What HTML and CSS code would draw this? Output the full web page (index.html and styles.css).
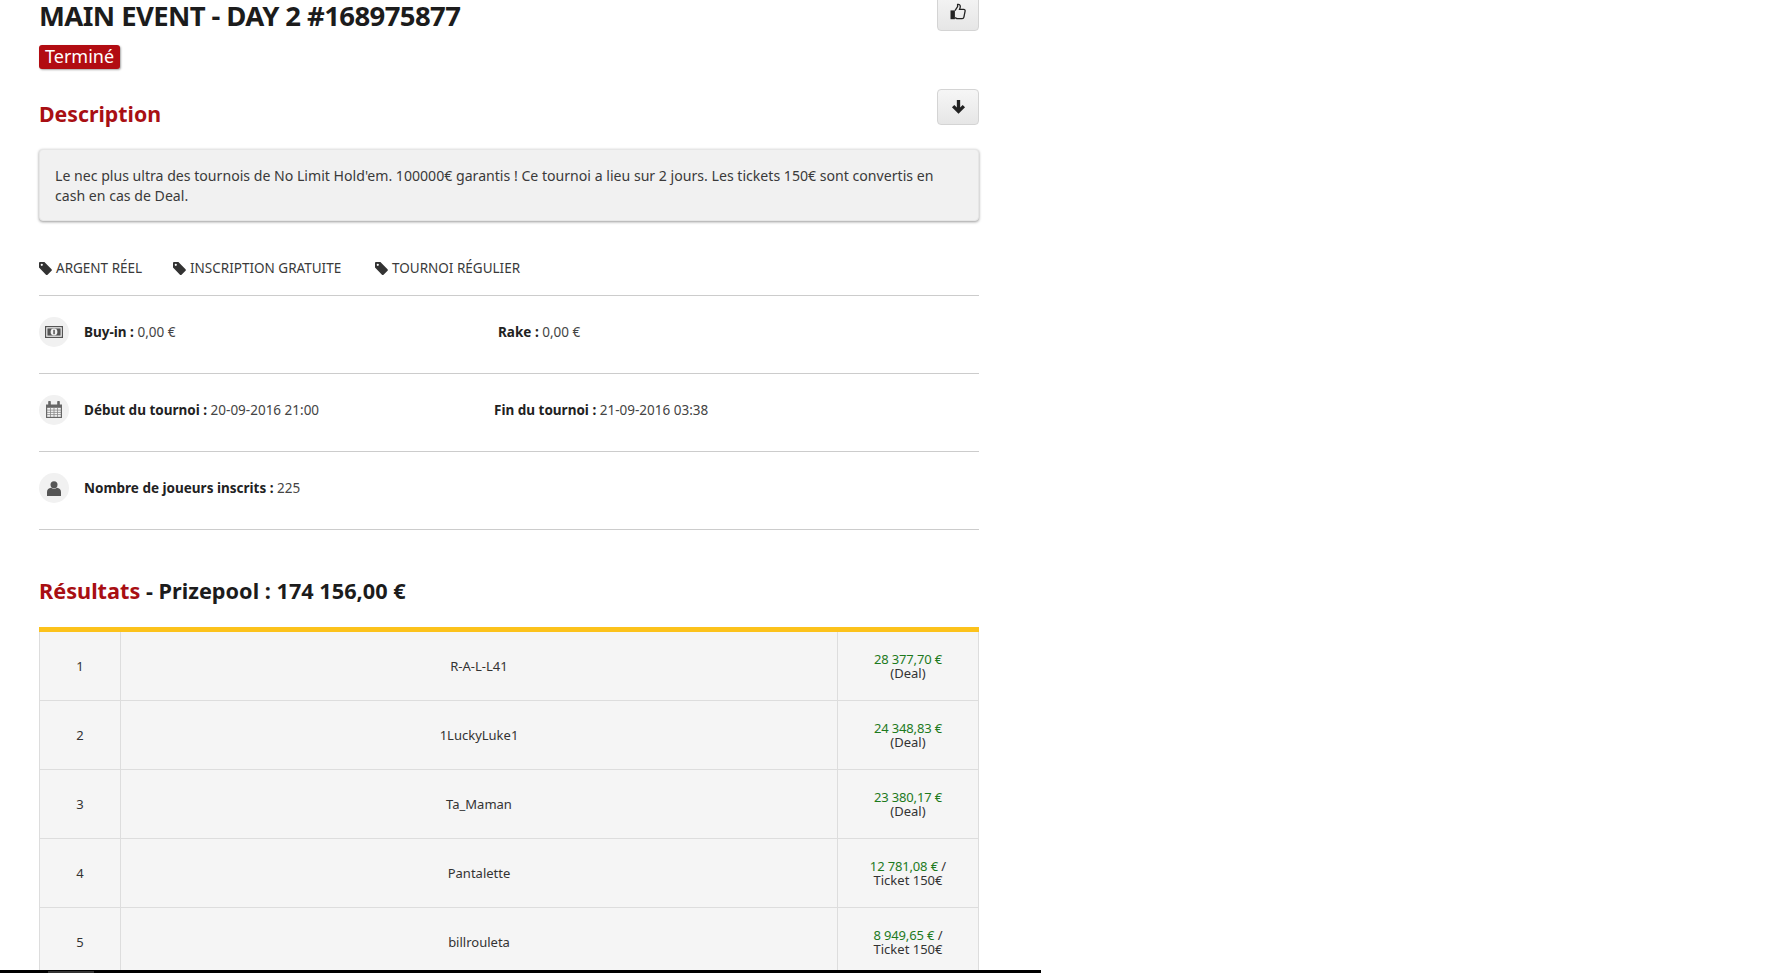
FILE: index.html
```html
<!DOCTYPE html>
<html lang="fr">
<head>
<meta charset="utf-8">
<title>MAIN EVENT - DAY 2</title>
<link rel="stylesheet" href="styles.css">
</head>
<body>
<main class="page">
  <header class="head">
    <div>
      <h1 class="title">MAIN EVENT - DAY 2 #168975877</h1>
      <span class="badge">Terminé</span>
    </div>
    <button class="btn btn-like" type="button" aria-label="J'aime">
      <svg class="ico" viewBox="0 0 18 18" width="18" height="18"><path d="M6 7.6 8.6 3.600V1.400c1.500-.4 2.700.5 2.700 2 0 1-.4 2-.8 3h4.200c1 0 1.600.8 1.400 1.800l-1.200 6c-.2.9-.8 1.400-1.700 1.400H8.400c-1 0-1.600-.7-2.400-.9" fill="none" stroke="#222" stroke-width="1.300"/><rect x="1.500" y="7.400" width="4.400" height="8.800" fill="#222"/></svg>
    </button>
  </header>

  <section class="desc-head">
    <h2 class="h-red">Description</h2>
    <button class="btn btn-down" type="button" aria-label="Déplier">
      <svg viewBox="0 0 14 14" width="15" height="15"><path d="M7 1V11M2 6.600 7 11.600 12 6.600" fill="none" stroke="#222" stroke-width="3.100"/></svg>
    </button>
  </section>

  <div class="well">Le nec plus ultra des tournois de No Limit Hold'em. 100000€ garantis ! Ce tournoi a lieu sur 2 jours. Les tickets 150€ sont convertis en cash en cas de Deal.</div>

  <ul class="tags">
    <li class="tag tag-a"><svg class="tag-ico" viewBox="0 0 14 14" width="14" height="14"><path d="M0 1.200C0 .6.500 0 1.200 0h4.600l7.700 7.700c.5.500.5 1.200 0 1.700l-4.300 4.200c-.5.500-1.200.5-1.700 0L0 6V1.200Z" fill="#333"/><circle cx="3" cy="3" r="1.200" fill="#fff"/></svg>ARGENT RÉEL</li>
    <li class="tag tag-b"><svg class="tag-ico" viewBox="0 0 14 14" width="14" height="14"><path d="M0 1.200C0 .6.500 0 1.200 0h4.600l7.700 7.700c.5.500.5 1.200 0 1.700l-4.300 4.200c-.5.500-1.200.5-1.700 0L0 6V1.200Z" fill="#333"/><circle cx="3" cy="3" r="1.200" fill="#fff"/></svg>INSCRIPTION GRATUITE</li>
    <li class="tag"><svg class="tag-ico" viewBox="0 0 14 14" width="14" height="14"><path d="M0 1.200C0 .6.500 0 1.200 0h4.600l7.700 7.700c.5.500.5 1.200 0 1.700l-4.300 4.200c-.5.500-1.200.5-1.700 0L0 6V1.200Z" fill="#333"/><circle cx="3" cy="3" r="1.200" fill="#fff"/></svg>TOURNOI RÉGULIER</li>
  </ul>

  <div class="info">
    <span class="circle"><svg viewBox="0 0 18 12" width="18" height="12"><rect x=".6" y=".6" width="16.800" height="10.800" fill="none" stroke="#555" stroke-width="1.200"/><rect x="2.400" y="2.400" width="13.200" height="7.200" fill="#555"/><ellipse cx="9" cy="6" rx="3.400" ry="3.400" fill="#f1f1f1"/><rect x="8.300" y="3.800" width="1.500" height="4.400" fill="#555"/></svg></span>
    <p class="cell cell-buy"><b>Buy-in :</b> 0,00 €</p>
    <p class="cell"><b>Rake :</b> 0,00 €</p>
  </div>
  <div class="info">
    <span class="circle circle-cal"><svg viewBox="0 0 16 17" width="16" height="17"><path d="M0 3.500h16V17H0z" fill="#666"/><path d="M3.500 1v4M12.500 1v4" stroke="#666" stroke-width="2.600" stroke-linecap="round"/><path d="M1.200 6.800h13.600v9H1.200z" fill="#f4f4f4"/><path d="M1 9.100h14M1 11.400h14M1 13.600h14M4.500 6.500v9.500M8 6.500v9.500M11.500 6.500v9.500" stroke="#888" stroke-width=".8"/></svg></span>
    <p class="cell cell-date"><b>Début du tournoi :</b> 20-09-2016 21:00</p>
    <p class="cell"><b>Fin du tournoi :</b> 21-09-2016 03:38</p>
  </div>
  <div class="info">
    <span class="circle"><svg viewBox="0 0 14 15" width="14" height="15"><circle cx="7" cy="3.800" r="3.500" fill="#555"/><path d="M0 15v-4C0 8.600 1.800 7 4 6.800c1.700 1.300 4.300 1.300 6 0 2.200.2 4 1.800 4 4.200v4H0Z" fill="#555"/></svg></span>
    <p class="cell"><b>Nombre de joueurs inscrits :</b> 225</p>
  </div>

  <h2 class="h-results"><span class="h-red-in">Résultats</span> - Prizepool : 174 156,00 €</h2>

  <table class="results">
    <tbody>
      <tr><td class="c-rank">1</td><td>R-A-L-L41</td><td class="c-prize"><span class="money">28 377,70 €</span><br>(Deal)</td></tr>
      <tr><td class="c-rank">2</td><td>1LuckyLuke1</td><td class="c-prize"><span class="money">24 348,83 €</span><br>(Deal)</td></tr>
      <tr><td class="c-rank">3</td><td>Ta_Maman</td><td class="c-prize"><span class="money">23 380,17 €</span><br>(Deal)</td></tr>
      <tr><td class="c-rank">4</td><td>Pantalette</td><td class="c-prize"><span class="money">12 781,08 €</span> /<br>Ticket 150€</td></tr>
      <tr><td class="c-rank">5</td><td>billrouleta</td><td class="c-prize"><span class="money">8 949,65 €</span> /<br>Ticket 150€</td></tr>
    </tbody>
  </table>
</main>
<div class="edge"><span class="edge-chip"></span></div>
</body>
</html>
```
FILE: styles.css
```css
* { box-sizing: border-box; }
html, body { margin: 0; padding: 0; height: 973px; overflow: hidden; background: #fff; }
body { font-family: "Noto Sans", "Open Sans", sans-serif; color: #333; font-size: 14px; }
.page { width: 940px; margin: -10px 0 0 39px; }
.head { display: flex; justify-content: space-between; align-items: flex-start; height: 91px; }
.title { margin: 6px 0 0; font-size: 27.500px; letter-spacing: -.6px; line-height: 40px; font-weight: 700; color: #1c1c1c; }
.badge { display: inline-block; margin-top: 9px; padding: 0 6px; height: 24px; line-height: 23px; font-size: 18px; color: #fff; background: #b20c12; border-radius: 3px; box-shadow: 1px 1px 2px rgba(0,0,0,.35); }
.btn { display: flex; align-items: center; justify-content: center; width: 42px; padding: 0; border: 1px solid #d4d4d4; border-radius: 4px; background: linear-gradient(#f6f6f6, #e6e6e6); }
.btn-like { height: 41px; padding-top: 3px; }
.btn-down { height: 36px; padding-bottom: 1px; }
.desc-head { display: flex; justify-content: space-between; align-items: flex-start; height: 60px; margin-top: 8px; }
.h-red { margin: 10px 0 0; font-size: 21.300px; line-height: 30px; font-weight: 700; color: #a80f13; }
.well { height: 72px; padding: 16px 15px 0; font-size: 14.120px; line-height: 20px; background: #f1f1f1; border: 1px solid #e6e6e6; border-radius: 4px; box-shadow: 0 1px 3px rgba(0,0,0,.4); color: #3a3a3a; }
.tags { display: flex; list-style: none; margin: 0; padding: 38px 0 0; height: 75px; border-bottom: 1px solid #ccc; align-items: flex-start; }
.tag { display: flex; align-items: center; font-size: 13.500px; line-height: 18px; color: #3a3a3a; }
.tag-a { width: 134px; }
.tag-b { width: 202px; }
.tag-ico { margin-right: 4px; flex: none; width: 13px; height: 13px; }
.info { display: flex; align-items: flex-start; height: 78px; padding-top: 21px; border-bottom: 1px solid #ccc; }
.circle { display: flex; align-items: center; justify-content: center; flex: none; width: 30px; height: 30px; border-radius: 50%; background: #f1f1f1; margin-right: 15px; }
.circle-cal { padding-bottom: 2px; }
.cell { margin: 0; font-size: 13.500px; line-height: 30px; color: #444; }
.cell b { color: #222; font-weight: 700; }
.cell-buy { width: 414px; }
.cell-date { width: 410px; }
.h-results { margin: 44px 0 0; font-size: 21.700px; line-height: 34px; font-weight: 700; color: #1c1c1c; }
.h-red-in { color: #a80f13; }
.results { width: 940px; margin-top: 19px; border-collapse: collapse; table-layout: fixed; border-top: 5px solid #fcc21b; background: #f5f5f5; }
.results td { height: 69px; padding: 0; border: 1px solid #ddd; text-align: center; font-size: 13px; line-height: 14px; color: #333; }
.results tr:first-child td { border-top: 0; height: 71px; }
.c-rank { width: 81px; }
.results .c-prize { width: 141px; }
.money { color: #1d7a1d; letter-spacing: -.15px; }
.edge { position: absolute; left: 0; bottom: 0; width: 1041px; height: 3px; background: #000; }
.edge-chip { position: absolute; left: 48px; top: 1px; width: 46px; height: 2px; background: #333; }
```
